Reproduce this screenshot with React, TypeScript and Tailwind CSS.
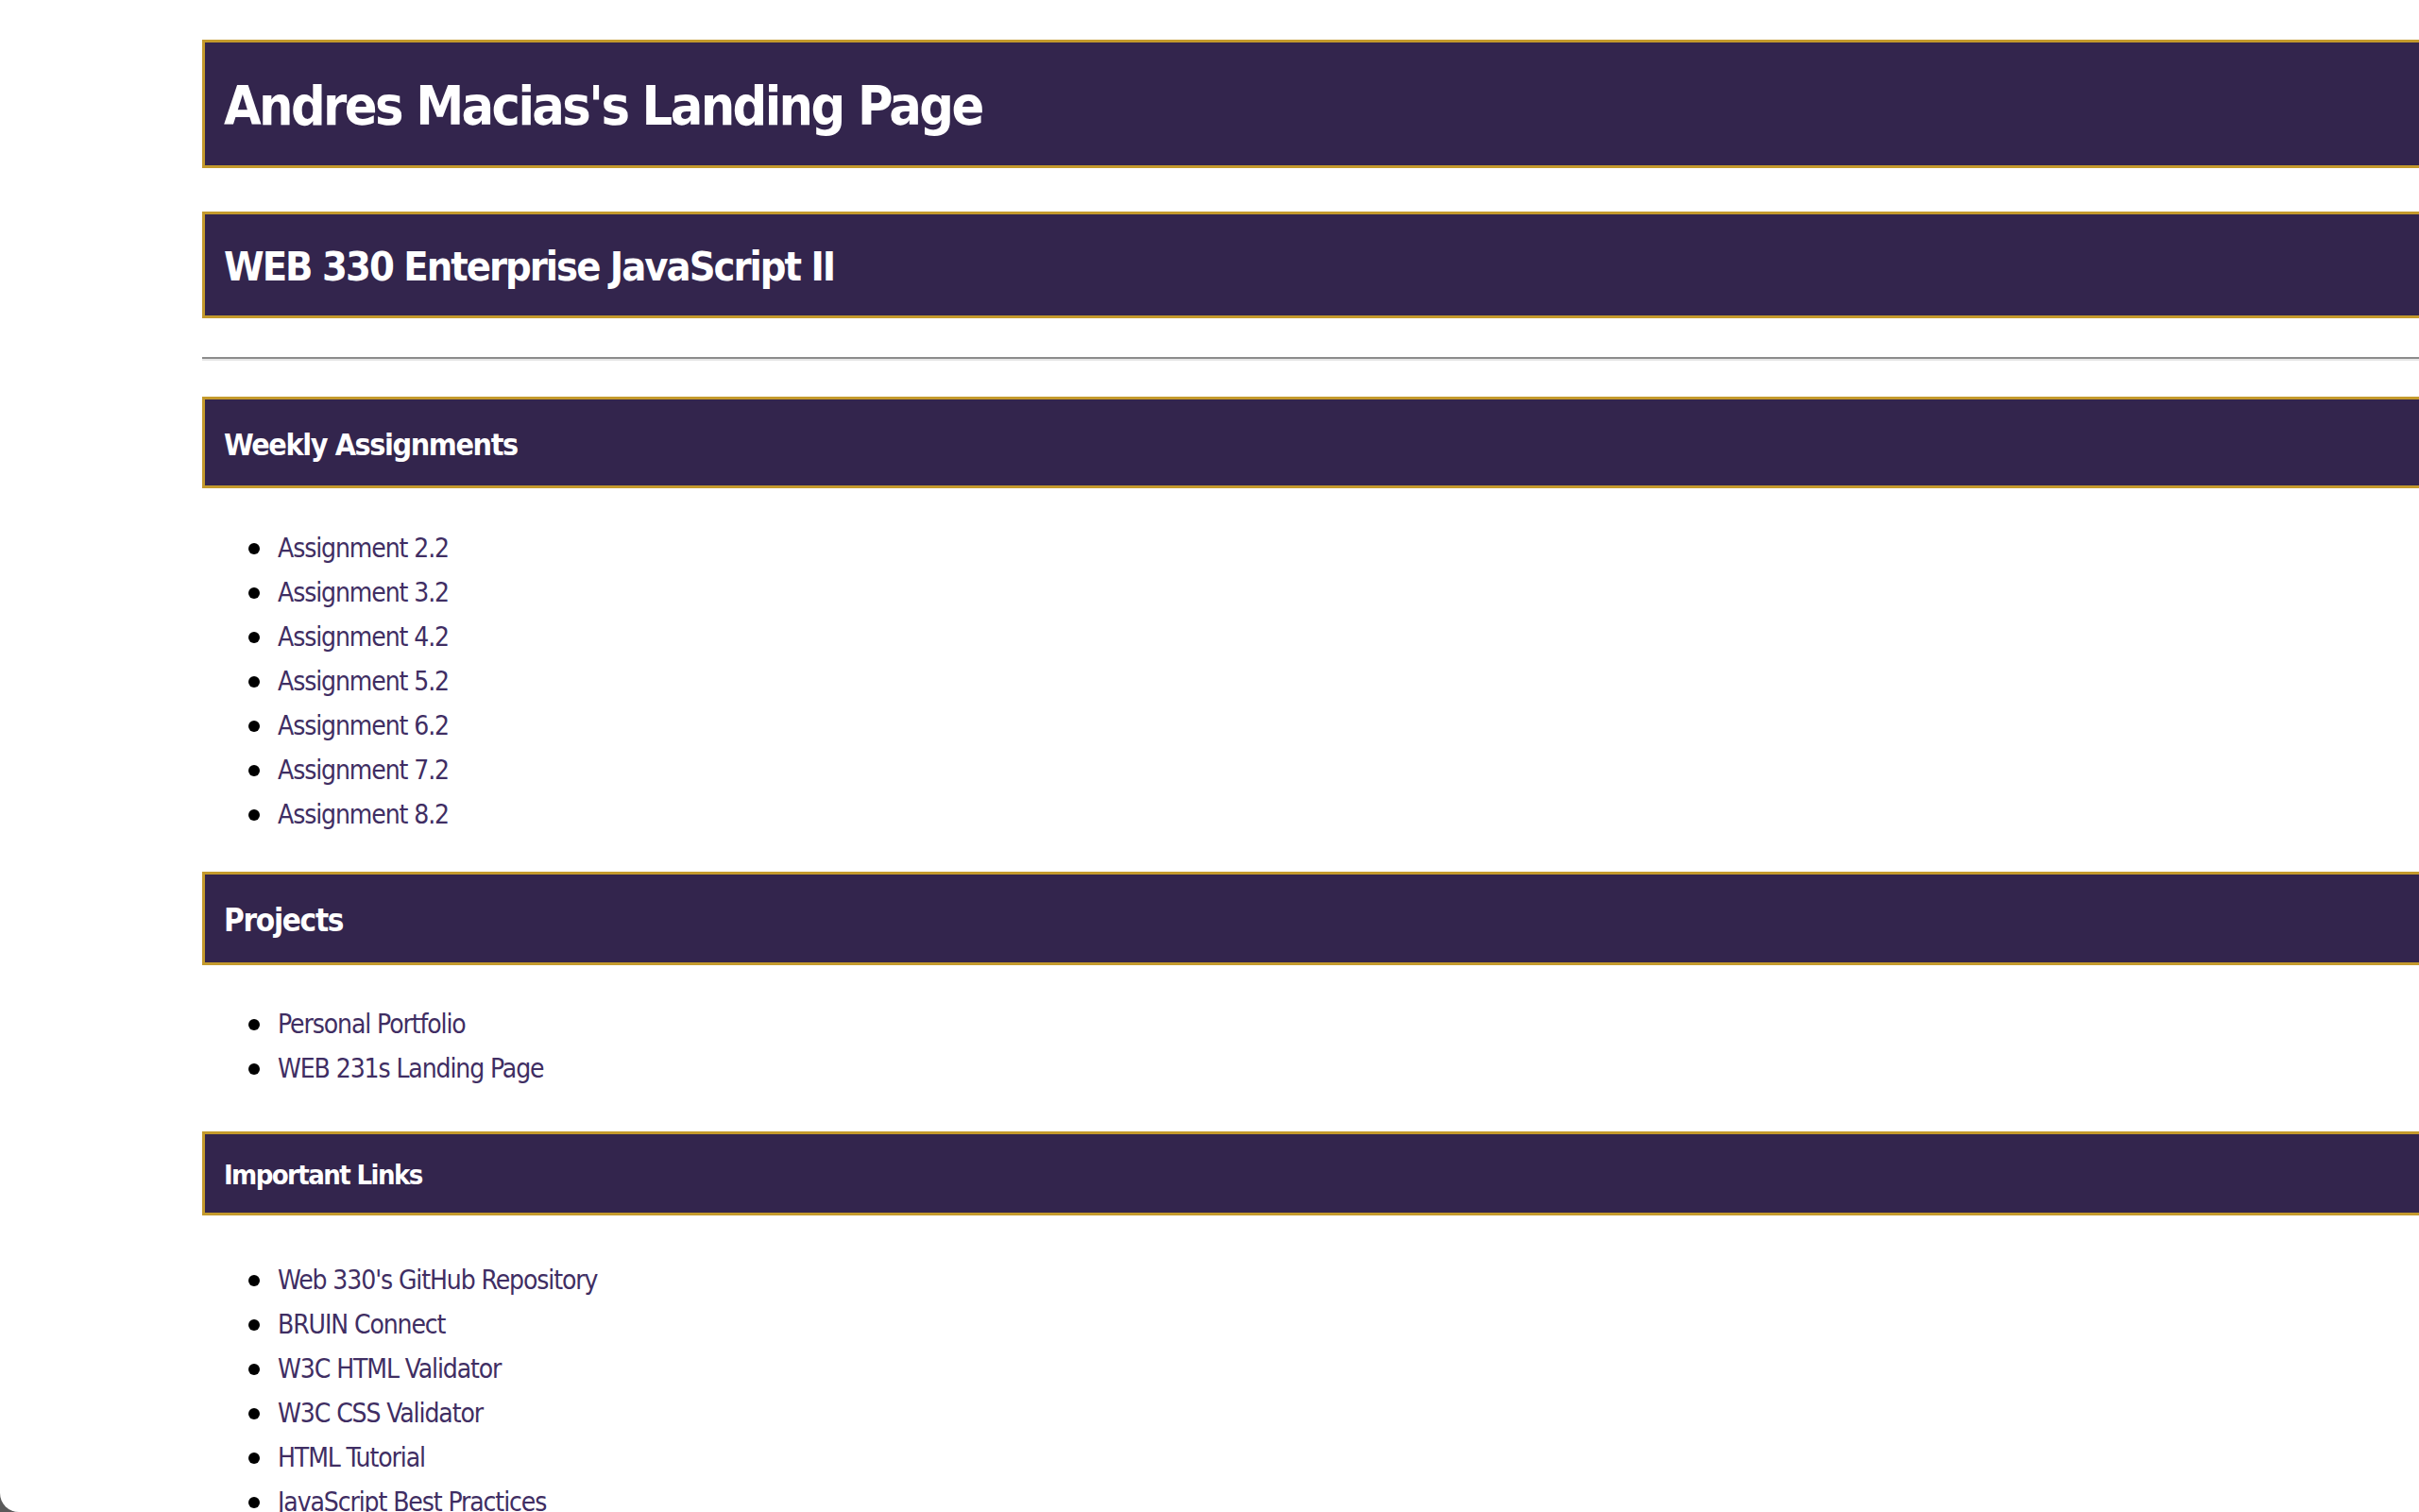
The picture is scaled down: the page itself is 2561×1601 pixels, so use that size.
import React from 'react';

const font = "font-['DejaVu_Sans_Condensed','DejaVu_Sans',sans-serif]";
const heading = `${font} font-bold text-white leading-none`;

const assignments = ['2.2', '3.2', '4.2', '5.2', '6.2', '7.2', '8.2'];
const projects = ['Personal Portfolio', 'WEB 231s Landing Page'];
const links = [
    "Web 330's GitHub Repository",
    'BRUIN Connect',
    'W3C HTML Validator',
    'W3C CSS Validator',
    'HTML Tutorial',
    'JavaScript Best Practices',
];

const Banner = ({ children, className }: { children: React.ReactNode; className: string }) => (
    <div className={`flex items-center border-y-[3px] border-l-[3px] border-r-0 border-[#c49a2c] bg-[#33254d] pl-[20px] pt-[4px] ${className}`}>
        {children}
    </div>
);

const LinkList = ({ items, className }: { items: string[]; className: string }) => (
    <ul className={`pl-[49px] text-[28px] leading-[47px] tracking-[-1.1px] ${font} ${className}`}>
        {items.map((item, i) => (
            <li key={i} className="flex items-center">
                <span className="mr-[19px] h-[12px] w-[12px] shrink-0 rounded-full bg-black" />
                <a href="#" className="text-[#3f2e63] no-underline">{item}</a>
            </li>
        ))}
    </ul>
);

export default function App() {
    return (
        <div className="h-[1601px] w-full overflow-hidden bg-[#5a5a5a]">
            <div className="h-full w-full overflow-hidden rounded-bl-[20px] bg-white pl-[214px] pt-[42px]">
                <Banner className="h-[136px]">
                    <h1 className={`${heading} text-[57px] tracking-[-2.6px]`}>Andres Macias's Landing Page</h1>
                </Banner>
                <Banner className="mt-[46px] h-[113px]">
                    <h2 className={`${heading} text-[43px] tracking-[-2px]`}>WEB 330 Enterprise JavaScript II</h2>
                </Banner>
                <div className="mt-[41px] border-t-2 border-b-2 border-t-[#8c8c8c] border-b-[#e6e6e6]" />

                <Banner className="mt-[38px] h-[97px]">
                    <h3 className={`${heading} text-[32px] tracking-[-1.4px]`}>Weekly Assignments</h3>
                </Banner>
                <LinkList items={assignments.map((a) => `Assignment ${a}`)} className="mt-[40px]" />

                <Banner className="mt-[37px] h-[99px]">
                    <h3 className={`${heading} text-[33px] tracking-[-1.3px]`}>Projects</h3>
                </Banner>
                <LinkList items={projects} className="mt-[39px]" />

                <Banner className="mt-[43px] h-[89px]">
                    <h4 className={`${heading} text-[29px] tracking-[-1.6px]`}>Important Links</h4>
                </Banner>
                <LinkList items={links} className="mt-[45px]" />
            </div>
        </div>
    );
}
